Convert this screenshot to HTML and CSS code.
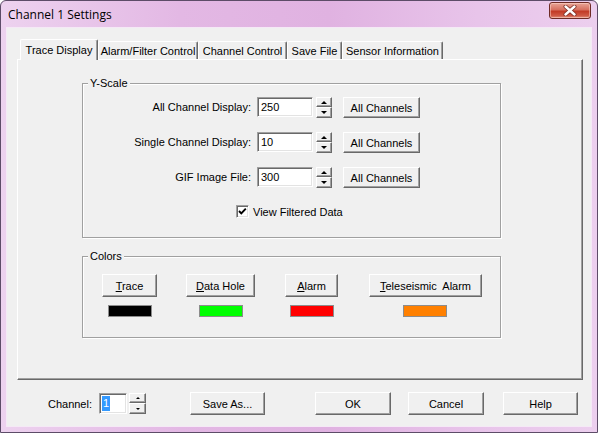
FILE: index.html
```html
<!DOCTYPE html>
<html>
<head>
<meta charset="utf-8">
<title>Channel 1 Settings</title>
<link rel="stylesheet" href="styles.css">
</head>
<body>
<div class="window">
  <div class="titlebar">
    <span class="title">Channel 1 Settings</span>
    <div class="close">
      <svg width="14" height="11" viewBox="0 0 14 11"><path d="M2.5 1.5 L11.5 9.5 M11.5 1.5 L2.5 9.5" stroke="#7a2a22" stroke-width="4" stroke-linecap="round"/><path d="M2.5 1.5 L11.5 9.5 M11.5 1.5 L2.5 9.5" stroke="#fff" stroke-width="2.4" stroke-linecap="round"/></svg>
    </div>
  </div>
  <div class="client">
    <div class="tabs">
      <div class="tab active t1">Trace Display</div>
      <div class="tab t2">Alarm/Filter Control</div>
      <div class="tab t3">Channel Control</div>
      <div class="tab t4">Save File</div>
      <div class="tab t5">Sensor Information</div>
    </div>
    <div class="panel">
      <div class="group yscale">
        <span class="group-title">Y-Scale</span>
        <div class="rows">
          <div class="row">
            <span class="lbl">All Channel Display:</span>
            <div class="field val">250</div>
            <div class="spin"><div class="spin-up"><i class="tri-up"></i></div><div class="spin-down"><i class="tri-down"></i></div></div>
            <div class="btn allch">All Channels</div>
          </div>
          <div class="row">
            <span class="lbl">Single Channel Display:</span>
            <div class="field val">10</div>
            <div class="spin"><div class="spin-up"><i class="tri-up"></i></div><div class="spin-down"><i class="tri-down"></i></div></div>
            <div class="btn allch">All Channels</div>
          </div>
          <div class="row">
            <span class="lbl">GIF Image File:</span>
            <div class="field val">300</div>
            <div class="spin"><div class="spin-up"><i class="tri-up"></i></div><div class="spin-down"><i class="tri-down"></i></div></div>
            <div class="btn allch">All Channels</div>
          </div>
        </div>
        <div class="check-row">
          <span class="checkbox"><svg width="11" height="11" viewBox="0 0 11 11"><polyline points="2,5 4.3,7.4 8.8,2.6" fill="none" stroke="#000" stroke-width="1.9"/></svg></span>
          <span>View Filtered Data</span>
        </div>
      </div>
      <div class="group colors">
        <span class="group-title">Colors</span>
        <div class="color-cols">
          <div class="ccol c1"><div class="btn cbtn"><span><u>T</u>race</span></div><div class="swatch black"></div></div>
          <div class="ccol c2"><div class="btn cbtn"><span><u>D</u>ata Hole</span></div><div class="swatch green"></div></div>
          <div class="ccol c3"><div class="btn cbtn"><span><u>A</u>larm</span></div><div class="swatch red"></div></div>
          <div class="ccol c4"><div class="btn cbtn"><span><u>T</u>eleseismic&nbsp; Alarm</span></div><div class="swatch orange"></div></div>
        </div>
      </div>
    </div>
    <div class="footer">
      <span class="ch-lbl">Channel:</span>
      <div class="field ch-field"><span class="sel">1</span></div>
      <div class="spin ch-spin"><div class="spin-up"><i class="tri-up small"></i></div><div class="spin-down"><i class="tri-down small"></i></div></div>
      <div class="btn fbtn saveas">Save As...</div>
      <div class="btn fbtn ok">OK</div>
      <div class="btn fbtn cancel">Cancel</div>
      <div class="btn fbtn help">Help</div>
    </div>
  </div>
</div>
</body>
</html>
```
FILE: styles.css
```css
* { box-sizing: border-box; }
html, body { margin: 0; padding: 0; }
body {
  width: 598px;
  height: 433px;
  overflow: hidden;
  background: #ffffff;
  font-family: "Liberation Sans", Arial, sans-serif;
  font-size: 11px;
  color: #000;
}
.window {
  width: 598px;
  height: 433px;
  display: flex;
  flex-direction: column;
  border: 1px solid #5d4c68;
  border-radius: 6px 6px 0 0;
  background: linear-gradient(to right, #edd2ef 0%, #e3b8e4 30%, #e0b2e1 55%, #e8c4ea 80%, #eccfee 100%);
}
.titlebar {
  height: 27px;
  display: flex;
  align-items: flex-start;
  flex-shrink: 0;
}
.title {
  font-family: "Open Sans", "Liberation Sans", sans-serif;
  font-size: 12px;
  line-height: 16px;
  margin: 6px 0 0 7px;
  color: #000;
}
.close {
  margin-left: auto;
  margin-right: 6px;
  margin-top: 1px;
  width: 42px;
  height: 17px;
  border: 1px solid #6e2b26;
  border-radius: 3px;
  background: linear-gradient(to bottom, #e9a597 0%, #d6705f 45%, #c23a25 55%, #cf5a45 85%, #e49583 100%);
  display: flex;
  align-items: center;
  justify-content: center;
  box-shadow: inset 0 0 0 1px rgba(255, 220, 210, 0.5);
}
.client {
  flex: 1;
  margin: 0 6px 6px 6px;
  background: #f0f0f0;
  padding: 11px 0 0 10px;
  box-shadow: 0 0 0 1px #f5e9f6;
  display: flex;
  flex-direction: column;
}
.tabs {
  display: flex;
  align-items: flex-end;
  height: 20px;
  margin-left: 3px;
}
.tab {
  height: 18px;
  background: #f0f0f0;
  border-top: 1px solid #fff;
  border-left: 1px solid #fff;
  border-right: 1px solid #696969;
  box-shadow: inset -1px 0 0 #a0a0a0;
  border-radius: 2px 2px 0 0;
  display: flex;
  align-items: center;
  justify-content: center;
  white-space: nowrap;
  padding-top: 1px;
}
.tab.active {
  height: 21px;
  margin-bottom: -1px;
  position: relative;
  z-index: 1;
  padding-bottom: 2px;
}
.t1 { width: 78px; }
.t2 { width: 100px; }
.t3 { width: 89px; }
.t4 { width: 55px; }
.t5 { width: 101px; }
.panel {
  width: 566px;
  height: 321px;
  border-top: 1px solid #fff;
  border-left: 1px solid #fff;
  border-right: 1px solid #696969;
  border-bottom: 1px solid #696969;
  box-shadow: inset -1px -1px 0 #a0a0a0;
  display: flex;
  flex-direction: column;
}
.group {
  width: 419px;
  margin-left: 64px;
  border: 1px solid #a0a0a0;
  box-shadow: inset 1px 1px 0 #fff, 1px 1px 0 #fff;
}
.group-title {
  display: block;
  width: max-content;
  margin: -7px 0 0 5px;
  padding: 0 2px;
  line-height: 13px;
  background: #f0f0f0;
}
.yscale {
  margin-top: 23px;
  height: 155px;
}
.rows {
  display: flex;
  flex-direction: column;
  gap: 14px;
  margin-top: 7px;
}
.row {
  display: flex;
  align-items: flex-start;
  height: 21px;
}
.lbl {
  width: 168px;
  text-align: right;
  margin-right: 6px;
  line-height: 20px;
  white-space: nowrap;
}
.field {
  background: #fff;
  border-top: 1px solid #a0a0a0;
  border-left: 1px solid #a0a0a0;
  border-right: 1px solid #fff;
  border-bottom: 1px solid #fff;
  box-shadow: inset 1px 1px 0 #696969, inset -1px -1px 0 #e3e3e3;
  display: flex;
  align-items: center;
}
.val {
  width: 56px;
  height: 20px;
  padding-left: 3px;
}
.spin {
  display: flex;
  flex-direction: column;
  width: 16px;
  height: 21px;
  margin-left: 3px;
}
.spin-up, .spin-down {
  background: #f0f0f0;
  border-top: 1px solid #fff;
  border-left: 1px solid #fff;
  border-right: 1px solid #696969;
  border-bottom: 1px solid #696969;
  box-shadow: inset -1px -1px 0 #a0a0a0;
  display: flex;
  align-items: center;
  justify-content: center;
}
.spin-up { height: 10px; }
.spin-down { height: 11px; }
.tri-up {
  width: 0; height: 0;
  border-left: 3px solid transparent;
  border-right: 3px solid transparent;
  border-bottom: 3px solid #000;
}
.tri-down {
  width: 0; height: 0;
  border-left: 3px solid transparent;
  border-right: 3px solid transparent;
  border-top: 3px solid #000;
}
.tri-up.small, .tri-down.small {
  border-left-width: 2px;
  border-right-width: 2px;
  border-top-width: 2px;
  border-bottom-width: 2px;
}
.tri-up.small { border-top: none; }
.tri-down.small { border-bottom: none; }
.btn {
  background: #f0f0f0;
  border-top: 1px solid #fff;
  border-left: 1px solid #fff;
  border-right: 1px solid #696969;
  border-bottom: 1px solid #696969;
  box-shadow: inset -1px -1px 0 #a0a0a0;
  display: flex;
  align-items: center;
  justify-content: center;
  white-space: nowrap;
}
.allch {
  width: 77px;
  height: 21px;
  margin-left: 11px;
}
.check-row {
  display: flex;
  align-items: center;
  margin-top: 17px;
  padding-left: 153px;
  height: 13px;
  gap: 4px;
}
.checkbox {
  width: 13px;
  height: 13px;
  background: #fff;
  border-top: 1px solid #a0a0a0;
  border-left: 1px solid #a0a0a0;
  border-right: 1px solid #fff;
  border-bottom: 1px solid #fff;
  box-shadow: inset 1px 1px 0 #696969, inset -1px -1px 0 #e3e3e3;
  display: flex;
  align-items: center;
  justify-content: center;
}
.colors {
  margin-top: 18px;
  height: 82px;
}
.color-cols {
  display: flex;
  margin-top: 11px;
  padding-left: 19px;
}
.ccol {
  display: flex;
  flex-direction: column;
  align-items: center;
  gap: 8px;
}
.cbtn {
  width: 100%;
  height: 23px;
}
.c1 { width: 55px; }
.c2 { width: 69px; margin-left: 29px; }
.c3 { width: 53px; margin-left: 30px; }
.c4 { width: 113px; margin-left: 31px; }
.c4 .swatch { margin-right: 2px; }
.swatch {
  width: 44px;
  height: 12px;
  border: 1px solid #8c8c8c;
}
.black { background: #000; }
.green { background: #00ff00; }
.red { background: #ff0000; }
.orange { background: #ff8000; }
.footer {
  display: flex;
  align-items: center;
  height: 23px;
  margin-top: 12px;
  margin-left: -10px;
}
.ch-lbl {
  width: 85px;
  text-align: right;
  margin-right: 7px;
}
.ch-field {
  width: 28px;
  height: 21px;
  padding-left: 2px;
}
.sel {
  background: #3399ff;
  color: #fff;
  line-height: 15px;
  padding: 0 1px;
}
.ch-spin {
  width: 17px;
  margin-left: 2px;
}
.fbtn { height: 23px; }
.saveas { width: 75px; margin-left: 44px; }
.ok { width: 76px; margin-left: 50px; }
.cancel { width: 76px; margin-left: 17px; }
.help { width: 75px; margin-left: 19px; }
```
